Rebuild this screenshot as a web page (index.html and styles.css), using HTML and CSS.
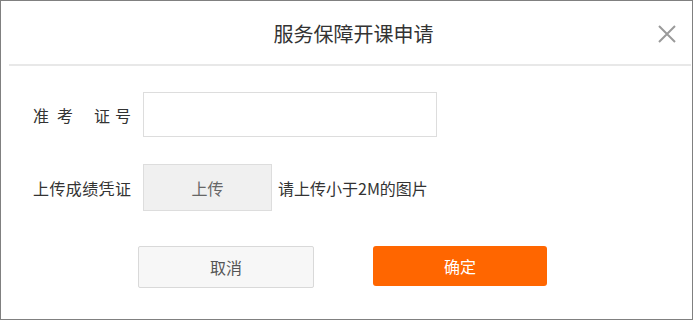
FILE: index.html
```html
<!DOCTYPE html>
<html lang="zh-CN">
<head>
<meta charset="utf-8">
<title>服务保障开课申请</title>
<link rel="stylesheet" href="styles.css">
</head>
<body>
<div class="dialog">
  <div class="header">
    <span class="spacer"></span>
    <h1 class="title">服务保障开课申请</h1>
    <span class="close-wrap">
      <svg class="close" width="20" height="20" viewBox="0 0 20 20" aria-label="关闭">
        <path d="M2 2 L18 18 M18 2 L2 18" stroke="#9a9a9a" stroke-width="2" fill="none"/>
      </svg>
    </span>
  </div>
  <div class="divider"></div>
  <div class="form">
    <div class="row">
      <label class="label label-spread"><span class="ch ch-1">准</span><span class="ch ch-2">考</span><span class="ch ch-3">证</span><span class="ch">号</span></label>
      <input class="text-input" type="text">
    </div>
    <div class="row row-upload">
      <label class="label">上传成绩凭证</label>
      <button class="upload-btn" type="button">上传</button>
      <span class="hint">请上传小于2M的图片</span>
    </div>
  </div>
  <div class="actions">
    <button class="btn btn-cancel" type="button">取消</button>
    <button class="btn btn-ok" type="button">确定</button>
  </div>
</div>
</body>
</html>
```

FILE: styles.css
```css
* { box-sizing: border-box; }
html, body {
  margin: 0;
  padding: 0;
  background: #ffffff;
}
body {
  font-family: "Noto Sans CJK SC", "Noto Sans", sans-serif;
  color: #333333;
}
.dialog {
  width: 693px;
  height: 320px;
  border: 1px solid #808080;
  background: #ffffff;
}
.header {
  height: 63px;
  display: grid;
  grid-template-columns: 1fr auto 1fr;
  align-items: center;
  padding-left: 14px;
}
.title {
  margin: 0;
  font-size: 20px;
  font-weight: normal;
  color: #333333;
  line-height: 26px;
  padding-top: 2px;
}
.close-wrap {
  justify-self: end;
  display: flex;
  padding-right: 15px;
  padding-top: 2px;
}
.divider {
  height: 2px;
  background: #e8e8e8;
  margin: 0 1px 0 8px;
}
.form {
  padding-top: 26px;
  padding-left: 32px;
}
.row {
  display: flex;
  align-items: center;
}
.row-upload {
  margin-top: 27px;
}
.label {
  width: 98px;
  margin-right: 12px;
  font-size: 16px;
  color: #333333;
  white-space: nowrap;
  text-align: justify;
  text-align-last: justify;
}
.label-spread {
  display: flex;
}
.ch-1 { margin-right: 8px; }
.ch-2 { margin-right: 21px; }
.ch-3 { margin-right: 5px; }
.text-input {
  width: 294px;
  height: 45px;
  border: 1px solid #dddddd;
  background: #ffffff;
  outline: none;
  margin: 0;
  padding: 0 8px;
}
.upload-btn {
  width: 129px;
  height: 47px;
  border: 1px solid #dddddd;
  background: #f0f0f0;
  color: #666666;
  font-family: inherit;
  font-size: 16px;
  margin: 0;
  padding: 0;
}
.hint {
  margin-left: 6px;
  font-size: 16px;
  color: #333333;
}
.actions {
  display: flex;
  align-items: flex-start;
  margin-top: 35px;
  padding-left: 137px;
  gap: 59px;
}
.btn {
  font-family: inherit;
  font-size: 16px;
  margin: 0;
  padding: 0;
  cursor: pointer;
}
.btn-cancel {
  width: 176px;
  height: 42px;
  border: 1px solid #d9d9d9;
  border-radius: 2px;
  background: #f7f7f7;
  color: #555555;
}
.btn-ok {
  width: 174px;
  height: 40px;
  border: none;
  border-radius: 3px;
  background: #ff6600;
  color: #ffffff;
}
```
